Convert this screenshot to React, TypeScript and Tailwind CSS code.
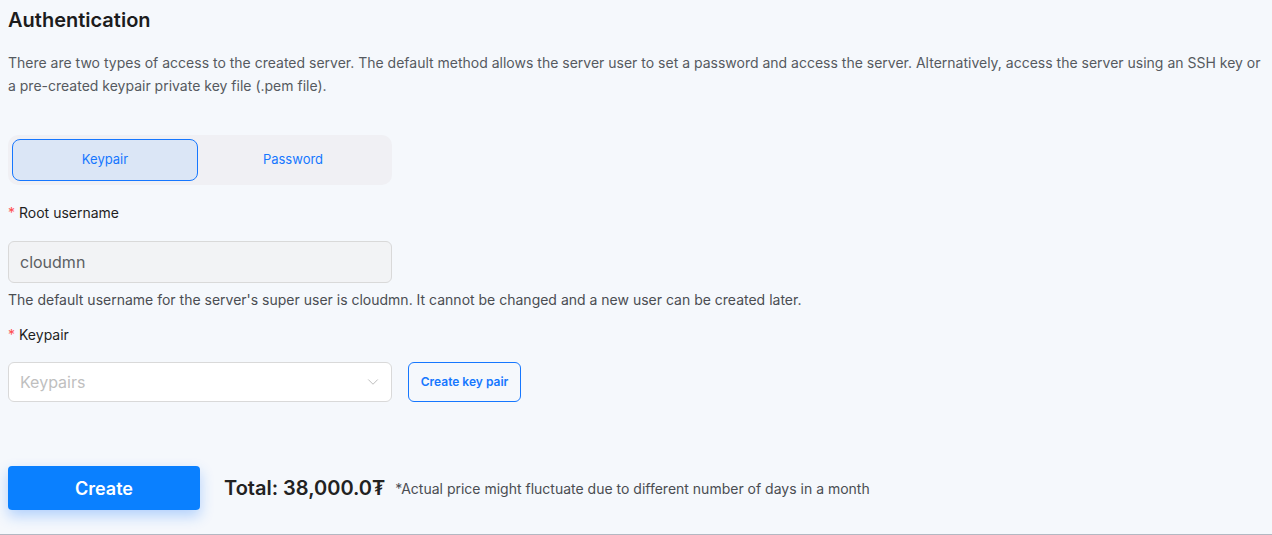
import { ChevronDown } from "lucide-react";

export default function App() {
  return (
    <div
      className="h-[535px] w-full bg-[#f5f8fc] border-b border-[#b3b8c2] overflow-hidden"
      style={{ fontFamily: "Inter, 'Liberation Sans', sans-serif" }}
    >
      <div className="px-2">
        {/* Heading */}
        <h2 className="pt-[8px] text-[20px] leading-[24px] font-semibold text-[#1c1c1c]">
          Authentication
        </h2>

        <p className="mt-[19px] text-[14px] leading-[23px] text-[#555a60]">
          There are two types of access to the created server. The default method allows the server user to set a password and access the server. Alternatively, access the server using an SSH key or a pre-created keypair private key file (.pem file).
        </p>

        {/* Tabs */}
        <div className="mt-[38px] w-[384px] h-[50px] p-[4px] rounded-[10px] bg-[#f0f0f4] flex">
          <button className="w-[186px] h-[42px] rounded-[8px] border border-[#1677ff] bg-[#dbe6f6] text-[13px] text-[#1677ff]">
            Keypair
          </button>
          <button className="flex-1 h-[42px] text-[13px] text-[#1677ff]">
            Password
          </button>
        </div>

        {/* Root username */}
        <div className="mt-[17px] text-[14px] leading-[22px] text-[#1f1f1f]">
          <span className="text-[#ff4d4f] mr-[4px]">*</span>Root username
        </div>
        <div className="mt-[17px] w-[384px] h-[42px] rounded-[6px] border border-[#d9d9d9] bg-[#f2f3f5] flex items-center px-[11px] text-[16px] text-[#5c5f63]">
          cloudmn
        </div>
        <div className="mt-[6px] text-[14px] leading-[22px] text-[#4a4d52]">
          The default username for the server's super user is cloudmn. It cannot be changed and a new user can be created later.
        </div>

        {/* Keypair */}
        <div className="mt-[13px] text-[14px] leading-[22px] text-[#1f1f1f]">
          <span className="text-[#ff4d4f] mr-[4px]">*</span>Keypair
        </div>
        <div className="mt-[16px] flex items-center gap-[16px]">
          <div className="w-[384px] h-[40px] rounded-[6px] border border-[#d9d9d9] bg-white flex items-center justify-between pl-[11px] pr-[9px]">
            <span className="text-[16px] text-[#bfbfbf]">Keypairs</span>
            <ChevronDown className="w-[18px] h-[18px] text-[#b8b8b8]" strokeWidth={1.25} />
          </div>
          <button className="w-[113px] h-[40px] rounded-[6px] border border-[#1677ff] bg-[#f5f8fc] text-[12px] font-semibold text-[#1677ff]">
            Create key pair
          </button>
        </div>

        {/* Footer */}
        <div className="mt-[64px] flex items-center">
          <button className="w-[192px] h-[44px] rounded-[4px] bg-[#0a80ff] text-white text-[18px] font-semibold shadow-[0_6px_14px_rgba(22,119,255,0.3)]">
            Create
          </button>
          <span className="ml-[24px] text-[20px] font-semibold text-[#222]">
            Total: 38,000.0₮
          </span>
          <span className="ml-[10px] text-[14px] text-[#4a4d52]">
            *Actual price might fluctuate due to different number of days in a month
          </span>
        </div>
      </div>
    </div>
  );
}
